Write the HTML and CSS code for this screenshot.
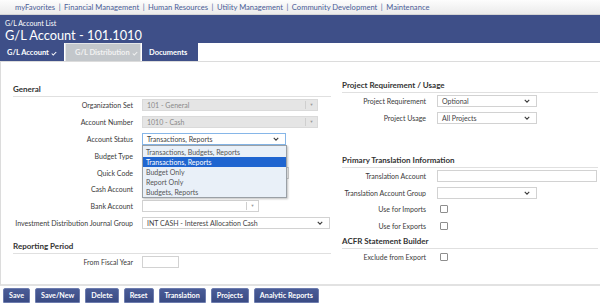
FILE: index.html
```html
<!DOCTYPE html>
<html lang="en">
<head>
    <meta charset="UTF-8">
    <title>G/L Account - 101.1010</title>
    <link rel="stylesheet" href="styles.css">
</head>
<body>
<!-- Top module menu -->
<nav class="topnav">
    <a href="#">myFavorites</a><span class="sep">|</span><a href="#">Financial Management</a><span class="sep">|</span><a href="#">Human Resources</a><span class="sep">|</span><a href="#">Utility Management</a><span class="sep">|</span><a href="#">Community Development</a><span class="sep">|</span><a href="#">Maintenance</a>
</nav>

<header class="titlebar">
    <div class="crumb">G/L Account List</div>
    <h1 class="title">G/L Account - 101.1010</h1>
</header>

<div class="tabs">
    <a href="#" class="tab tab-account">G/L Account <svg class="check" viewBox="0 0 8 6" width="6" height="5"><polyline points="1,3 3,5 7,1"/></svg></a>
    <a href="#" class="tab tab-distribution">G/L Distribution <svg class="check" viewBox="0 0 8 6" width="6" height="5"><polyline points="1,3 3,5 7,1"/></svg></a>
    <a href="#" class="tab tab-documents">Documents</a>
</div>

<div class="panel">
    <div class="col col-left">
        <h2 class="section-title">General</h2>
        <div class="row">
            <label>Organization Set</label>
            <div class="field combo disabled w-176">101 - General<span class="combo-btn">&#9660;</span></div>
        </div>
        <div class="row">
            <label>Account Number</label>
            <div class="field combo disabled w-176">1010 - Cash<span class="combo-btn">&#9660;</span></div>
        </div>
        <div class="row">
            <label>Account Status</label>
            <div class="field select focused w-144">Transactions, Reports
                <svg class="chev" viewBox="0 0 8 5" width="6" height="4"><polyline points="1,1 4,4 7,1"/></svg>
                <!-- Open option list -->
                <ul class="options">
                    <li>Transactions, Budgets, Reports</li>
                    <li class="selected">Transactions, Reports</li>
                    <li>Budget Only</li>
                    <li>Report Only</li>
                    <li>Budgets, Reports</li>
                </ul>
            </div>
        </div>
        <div class="row">
            <label>Budget Type</label>
            <div class="field w-140"></div>
        </div>
        <div class="row">
            <label>Quick Code</label>
            <div class="field w-147"></div>
        </div>
        <div class="row">
            <label>Cash Account</label>
            <div class="field w-140"></div>
        </div>
        <div class="row">
            <label>Bank Account</label>
            <div class="field combo w-117"><span class="combo-btn">&#9660;</span></div>
        </div>
        <div class="row">
            <label>Investment Distribution Journal Group</label>
            <div class="field select w-188">INT CASH - Interest Allocation Cash
                <svg class="chev" viewBox="0 0 8 5" width="6" height="4"><polyline points="1,1 4,4 7,1"/></svg>
            </div>
        </div>

        <h2 class="section-title section-gap">Reporting Period</h2>
        <div class="row">
            <label>From Fiscal Year</label>
            <div class="field w-37"></div>
        </div>
    </div>

    <div class="col col-right">
        <h2 class="section-title">Project Requirement / Usage</h2>
        <div class="row">
            <label>Project Requirement</label>
            <div class="field select w-100">Optional
                <svg class="chev" viewBox="0 0 8 5" width="6" height="4"><polyline points="1,1 4,4 7,1"/></svg>
            </div>
        </div>
        <div class="row">
            <label>Project Usage</label>
            <div class="field select w-100">All Projects
                <svg class="chev" viewBox="0 0 8 5" width="6" height="4"><polyline points="1,1 4,4 7,1"/></svg>
            </div>
        </div>

        <h2 class="section-title section-gap-lg">Primary Translation Information</h2>
        <div class="row">
            <label>Translation Account</label>
            <div class="field w-160"></div>
        </div>
        <div class="row">
            <label>Translation Account Group</label>
            <div class="field select w-100">
                <svg class="chev" viewBox="0 0 8 5" width="6" height="4"><polyline points="1,1 4,4 7,1"/></svg>
            </div>
        </div>
        <div class="row">
            <label>Use for Imports</label>
            <span class="checkbox"></span>
        </div>
        <div class="row">
            <label>Use for Exports</label>
            <span class="checkbox"></span>
        </div>

        <h2 class="section-title section-gap-sm">ACFR Statement Builder</h2>
        <div class="row">
            <label>Exclude from Export</label>
            <span class="checkbox"></span>
        </div>
    </div>
</div>

<div class="actions">
    <button>Save</button>
    <button>Save/New</button>
    <button>Delete</button>
    <button>Reset</button>
    <button>Translation</button>
    <button>Projects</button>
    <button>Analytic Reports</button>
</div>
</body>
</html>
```

FILE: styles.css
```css
* {
    margin: 0;
    padding: 0;
    box-sizing: border-box;
}

:root {
    --navy: #3e4f88;
    --link: #4b5d98;
    --line: #e0e0e0;
    --text: #333333;
}

body {
    font-family: Lato, "Open Sans", sans-serif;
    font-size: 7px;
    color: var(--text);
    background-color: #fff;
    width: 600px;
    height: 304px;
    overflow: hidden;
}

/* Top module menu */
.topnav {
    height: 15px;
    line-height: 14px;
    padding-left: 15px;
    font-size: 7.6px;
    white-space: nowrap;
    background: linear-gradient(#fdfdfd, #ebebeb);
    border-bottom: 1px solid #d4d4d4;
}

.topnav a {
    color: var(--link);
    text-decoration: none;
}

.topnav .sep {
    color: var(--link);
    margin: 0 3.5px;
}

/* Title band */
.titlebar {
    height: 28px;
    padding: 4px 5px 0;
    background-color: var(--navy);
    color: #fff;
}

.crumb {
    font-size: 7px;
    line-height: 9px;
}

.title {
    font-size: 12.8px;
    font-weight: normal;
    line-height: 15px;
}

/* Tabs */
.tabs {
    display: flex;
    height: 18px;
    gap: 1px;
}

.tab {
    display: flex;
    align-items: center;
    gap: 2px;
    height: 100%;
    padding-left: 7px;
    font-size: 7.5px;
    font-weight: bold;
    color: #fff;
    text-decoration: none;
    background-color: var(--navy);
}

.tab .check {
    fill: none;
    stroke: currentColor;
    stroke-width: 1.4;
    margin-top: 2px;
}

.tab-account {
    width: 64px;
}

.tab-distribution {
    width: 76px;
    padding-left: 9px;
    color: #f2f2f2;
    background-color: #c3c7cb;
    border: 1px solid #e4e6e8;
    border-bottom: none;
}

.tab-documents {
    width: 56px;
}

/* Form panel */
.panel {
    display: grid;
    grid-template-columns: 318px 256px;
    column-gap: 11px;
    height: 225px;
    padding-left: 12px;
    border-top: 1px solid #dcdcdc;
    border-left: 1px solid #dcdcdc;
    border-bottom: 2px solid #e2e2e2;
}

.col-left {
    padding-top: 22px;
}

.col-right {
    padding-top: 18px;
}

.section-title {
    font-size: 8px;
    font-weight: bold;
    line-height: 11px;
    padding-bottom: 1px;
    color: #333;
    border-bottom: 1px solid var(--line);
}

.section-gap {
    margin-top: 9.6px;
}

.section-gap-lg {
    margin-top: 29px;
}

.section-gap-sm {
    margin-top: 2px;
}

.row {
    display: flex;
    align-items: center;
    height: 16.5px;
}

.col-left .row {
    height: 16.8px;
}

.row label {
    flex-shrink: 0;
    text-align: right;
    color: #3a3a3a;
    white-space: nowrap;
}

.col-left .row label {
    width: 120px;
    margin-right: 9px;
}

.col-right .row label {
    width: 84px;
    margin-right: 11px;
}

/* Fake inputs */
.field {
    position: relative;
    display: flex;
    align-items: center;
    height: 12px;
    padding-left: 4px;
    color: #444;
    white-space: nowrap;
    background-color: #fff;
    border: 1px solid #d2d2d2;
}

.field.disabled {
    color: #8a8a8a;
    background-color: #e5e5e5;
    border-color: #dadada;
}

.field.focused {
    border-color: #86b6e8;
}

.combo-btn {
    position: absolute;
    top: 1px;
    right: 0;
    bottom: 1px;
    width: 12px;
    font-size: 4px;
    line-height: 8px;
    text-align: center;
    color: #9a9a9a;
    border-left: 1px solid #cfcfcf;
}

.chev {
    position: absolute;
    right: 6px;
    top: 3px;
    fill: none;
    stroke: #3c3c3c;
    stroke-width: 1.5;
}

.w-37 { width: 37px; }
.w-100 { width: 100px; }
.w-117 { width: 117px; }
.w-140 { width: 140px; }
.w-144 { width: 144px; }
.w-147 { width: 147px; }
.w-160 { width: 160px; }
.w-176 { width: 176px; }
.w-188 { width: 188px; }

/* Open dropdown list over the rows below */
.options {
    position: absolute;
    top: 11px;
    left: -1px;
    z-index: 2;
    width: 145px;
    list-style: none;
    padding-top: 1px;
    background-color: #e9f0f8;
    border: 1px solid #9aa0a6;
    box-shadow: 1px 1px 2px rgba(0, 0, 0, 0.25);
}

.options li {
    height: 10px;
    line-height: 10px;
    padding-left: 3px;
    color: #555;
}

.options li.selected {
    color: #fff;
    background-color: #1f65d0;
}

.checkbox {
    display: block;
    width: 8px;
    height: 8px;
    margin-left: 3px;
    border: 1px solid #8e8e8e;
    border-radius: 1px;
    background-color: #fff;
}

/* Bottom action buttons */
.actions {
    display: flex;
    gap: 5px;
    padding: 2px 0 0 3px;
}

button {
    height: 15px;
    padding: 0 5px;
    font-family: Lato, "Open Sans", sans-serif;
    font-size: 7.2px;
    font-weight: bold;
    color: #fff;
    background: linear-gradient(#4a5c97, #3a4b84);
    border: 1px solid #6d7cae;
    border-radius: 2px 2px 0 0;
    cursor: pointer;
}

button:hover {
    background: #2f3f75;
}
```
